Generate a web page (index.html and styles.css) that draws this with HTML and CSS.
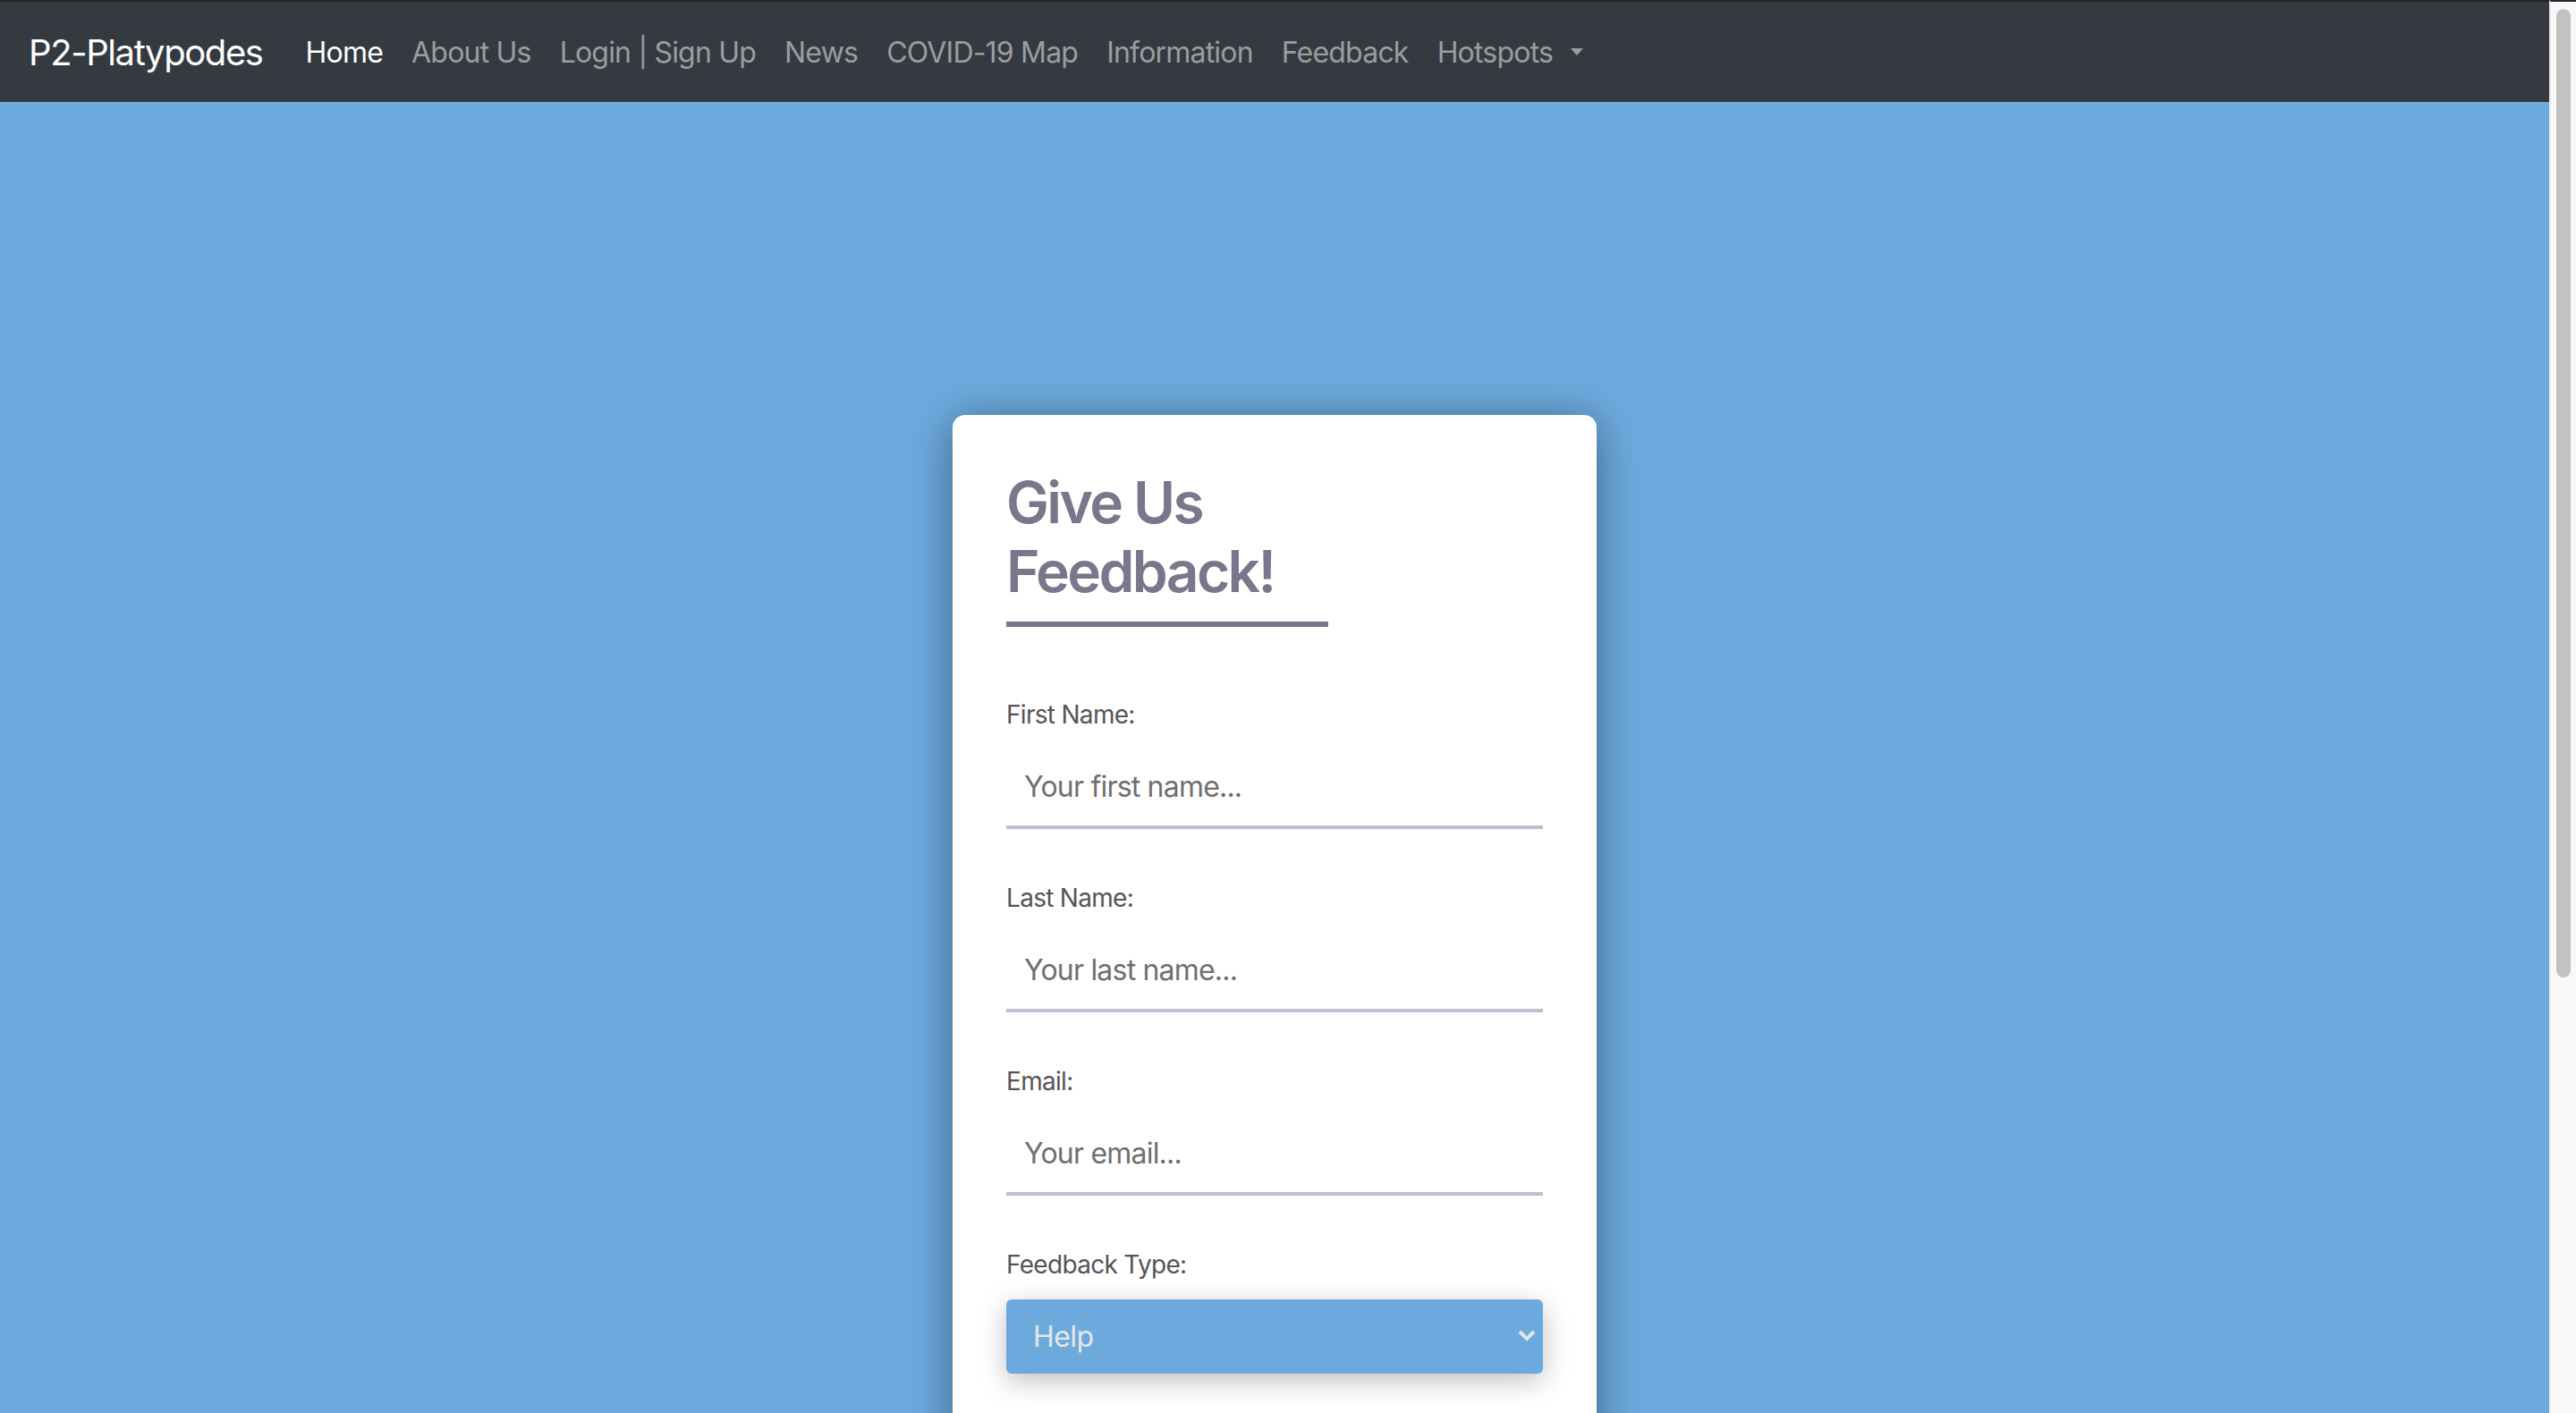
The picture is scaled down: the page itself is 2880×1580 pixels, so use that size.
FILE: index.html
```html
<!DOCTYPE html>
<html lang="en">
<head>
<meta charset="utf-8">
<title>Feedback - P2-Platypodes</title>
<link rel="stylesheet" href="styles.css">
</head>
<body>
<nav class="navbar">
  <a class="brand" href="#">P2-Platypodes</a>
  <ul class="nav">
    <li><a class="nav-link active" href="#">Home</a></li>
    <li><a class="nav-link" href="#">About Us</a></li>
    <li><a class="nav-link" href="#">Login | Sign Up</a></li>
    <li><a class="nav-link" href="#">News</a></li>
    <li><a class="nav-link" href="#">COVID-19 Map</a></li>
    <li><a class="nav-link" href="#">Information</a></li>
    <li><a class="nav-link" href="#">Feedback</a></li>
    <li><a class="nav-link dropdown" href="#">Hotspots<span class="caret"></span></a></li>
  </ul>
</nav>
<main class="page">
  <form class="card">
    <h2 class="title">Give Us Feedback!</h2>
    <div class="group">
      <label class="label" for="first">First Name:</label>
      <input class="field" id="first" type="text" placeholder="Your first name...">
    </div>
    <div class="group">
      <label class="label" for="last">Last Name:</label>
      <input class="field" id="last" type="text" placeholder="Your last name...">
    </div>
    <div class="group">
      <label class="label" for="email">Email:</label>
      <input class="field" id="email" type="email" placeholder="Your email...">
    </div>
    <div class="group">
      <label class="label" for="type">Feedback Type:</label>
      <div class="select-wrap">
        <div class="select" id="type" role="listbox">Help</div>
        <svg class="chevron" width="20" height="14" viewBox="0 0 20 14"><path d="M2 2 L10 10 L18 2" fill="none" stroke="#e4e4e4" stroke-width="4"/></svg>
      </div>
    </div>
  </form>
</main>
<div class="scrollbar" aria-hidden="true"><div class="thumb"></div></div>
</body>
</html>
```
FILE: styles.css
```css
html {
  background: #6caade;
}
body {
  margin: 0 30px 0 0;
  background: #6caade;
  font-family: Inter, "Noto Sans", "Liberation Sans", sans-serif;
}
.scrollbar {
  position: fixed;
  top: 0;
  right: 0;
  width: 30px;
  height: 100vh;
  box-sizing: border-box;
  background: #f9f9f9;
  border-left: 2px solid #ebebeb;
  border-top: 2px solid #222629;
  padding: 8px 6px 0 6px;
}
.thumb {
  height: 1083px;
  border-radius: 8px;
  background: #c2c2c2;
}
.navbar {
  display: flex;
  align-items: center;
  height: 112px;
  padding: 0 32px;
  background: #343a40;
  border-top: 2px solid #222629;
}
.brand {
  font-size: 40px;
  color: #fff;
  text-decoration: none;
  margin-right: 32px;
  letter-spacing: -1.4px;
}
.nav {
  display: flex;
  list-style: none;
  margin: 0;
  padding: 0;
}
.nav-link {
  display: flex;
  align-items: center;
  padding: 0 16px;
  font-size: 32px;
  color: #9a9da0;
  text-decoration: none;
  letter-spacing: -0.8px;
}
.nav-link.active {
  color: #fff;
}
.caret {
  display: inline-block;
  margin-left: 20px;
  width: 0;
  height: 0;
  border-top: 8px solid #9a9da0;
  border-left: 7px solid transparent;
  border-right: 7px solid transparent;
}
.page {
  padding: 350px 0 600px;
  display: flex;
  justify-content: center;
}
.card {
  width: 720px;
  box-sizing: border-box;
  padding: 60px 60px 300px;
  background: #fff;
  border-radius: 14px;
  box-shadow: 0 6px 50px rgba(0, 0, 0, 0.42);
}
.title {
  width: 360px;
  margin: 0 0 77px;
  padding-bottom: 17px;
  border-bottom: 6px solid #78778b;
  font-size: 64px;
  line-height: 76.8px;
  font-weight: 600;
  color: #78778b;
  letter-spacing: -2.6px;
}
.group {
  display: flex;
  flex-direction: column;
  margin-bottom: 56px;
}
.label {
  font-size: 28px;
  line-height: 42px;
  color: #555;
  margin-bottom: 16px;
  letter-spacing: -0.7px;
}
.field {
  height: 91px;
  box-sizing: border-box;
  padding: 0 20px;
  border: none;
  border-bottom: 4px solid #bfbcd4;
  font-family: inherit;
  font-size: 32px;
  color: #333;
  outline: none;
  background: transparent;
  letter-spacing: -0.8px;
}
.field::placeholder {
  color: #6f6f6f;
}
.select-wrap {
  position: relative;
  margin-top: 2px;
}
.select {
  display: flex;
  align-items: center;
  height: 83px;
  padding: 0 30px;
  border-radius: 6px;
  background: #6caade;
  color: #e6e6e6;
  font-size: 32px;
  letter-spacing: -0.6px;
  box-shadow: 0 8px 30px rgba(0, 0, 0, 0.25);
}
.chevron {
  position: absolute;
  right: 8px;
  top: 34px;
  pointer-events: none;
}
```
